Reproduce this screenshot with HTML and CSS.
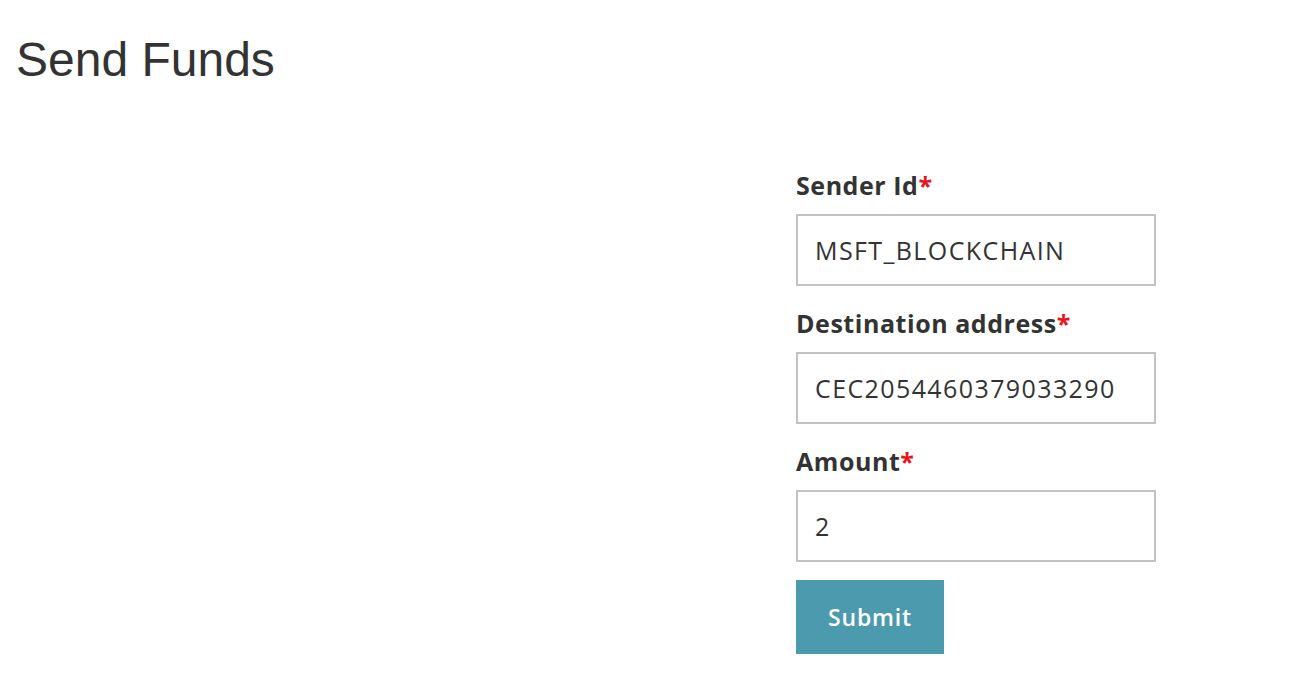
FILE: index.html
```html
<!DOCTYPE html>
<html lang="en">
<head>
<meta charset="utf-8">
<title>Send Funds</title>
<link rel="stylesheet" href="styles.css">
</head>
<body>
<div class="page">
  <h1 class="title">Send Funds</h1>
  <div class="layout">
    <div class="spacer"></div>
    <form class="form">
      <div class="field">
        <label class="label">Sender Id<span class="req">*</span></label>
        <input class="input" type="text" value="MSFT_BLOCKCHAIN">
      </div>
      <div class="field">
        <label class="label">Destination address<span class="req">*</span></label>
        <input class="input" type="text" value="CEC2054460379033290">
      </div>
      <div class="field">
        <label class="label">Amount<span class="req">*</span></label>
        <input class="input" type="text" value="2">
      </div>
      <button class="submit" type="button">Submit</button>
    </form>
  </div>
</div>
</body>
</html>
```
FILE: styles.css
```css
html, body {
  margin: 0;
  padding: 0;
  background: #ffffff;
}
.page {
  padding: 0 16px;
}
.title {
  font-family: "Liberation Sans", Arial, sans-serif;
  font-weight: normal;
  font-size: 48px;
  line-height: 54px;
  color: #333333;
  margin: 33px 0 0 0;
}
.layout {
  display: grid;
  grid-template-columns: 780px 360px;
  margin-top: 81px;
}
.form {
  display: flex;
  flex-direction: column;
}
.field {
  display: flex;
  flex-direction: column;
}
.label {
  font-family: "Open Sans", sans-serif;
  font-weight: bold;
  font-size: 25px;
  line-height: 34px;
  letter-spacing: 0.55px;
  color: #333333;
  margin-bottom: 12px;
}
.req {
  color: #e8141c;
}
.input {
  box-sizing: border-box;
  width: 360px;
  height: 72px;
  border: 2px solid #c3c3c3;
  padding: 0 17px;
  font-family: "Open Sans", sans-serif;
  font-size: 25px;
  letter-spacing: 1.4px;
  color: #333333;
  margin: 0 0 20px 0;
  outline: none;
}
.submit {
  align-self: flex-start;
  width: 148px;
  height: 74px;
  border: none;
  background: #4b9aae;
  color: #ffffff;
  font-family: "Open Sans", sans-serif;
  font-size: 23px;
  font-weight: 600;
  letter-spacing: 0.8px;
  padding: 0;
  margin-top: -2px;
}
```
